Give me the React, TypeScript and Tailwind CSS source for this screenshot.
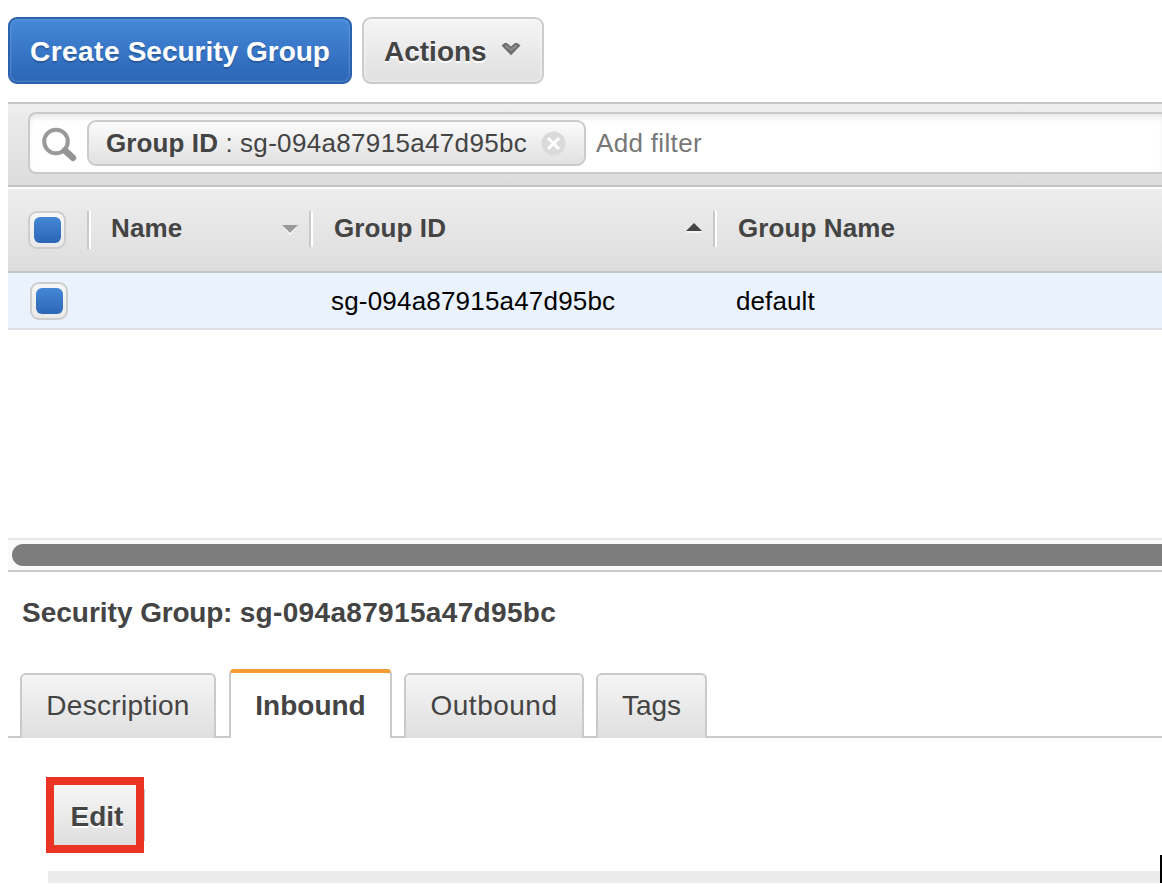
import type { ReactNode } from "react";

const GROUP_ID = "sg-094a87915a47d95bc";

function Checkbox() {
  return (
    <span className="flex h-[38px] w-[38px] shrink-0 items-center justify-center rounded-[9px] border-2 border-[#cdcdcd] bg-gradient-to-b from-[#f7f7f7] to-[#e9e9e9]">
      <span className="h-[26px] w-[27px] rounded-[6px] bg-gradient-to-b from-[#4587d6] to-[#2c66b6]" />
    </span>
  );
}

function Divider({ tall = false }: { tall?: boolean }) {
  return (
    <span
      className={
        tall
          ? "h-[38px] w-1 shrink-0 border-l-2 border-r-2 border-l-[#c9c9c9] border-r-white"
          : "mb-[2px] h-9 w-1 shrink-0 border-l-2 border-r-2 border-l-[#c9c9c9] border-r-white"
      }
    />
  );
}

function Tab({ width, children }: { width: string; children: ReactNode }) {
  return (
    <button
      className={`${width} h-[65px] shrink-0 rounded-t-[6px] border-2 border-b-0 border-[#cacaca] bg-gradient-to-b from-[#f5f5f5] to-[#dfdfdf] pb-[2px] text-[28px] leading-[60px] text-[#444]`}
    >
      {children}
    </button>
  );
}

function TabGap({ width }: { width: string }) {
  return <div className={`${width} h-[2px] bg-[#cacaca]`} />;
}

function Toolbar() {
  return (
    <div className="flex h-[102px] gap-[10px] pl-2 pt-[17px]">
      <button className="h-[67px] w-[344px] rounded-[9px] border-2 border-[#2a62b0] bg-gradient-to-b from-[#4688d8] to-[#2b65b6] pt-[3px] text-[28px] font-bold text-white shadow-[inset_0_0_2px_1px_rgba(130,170,210,0.45)] [text-shadow:0_2px_1px_rgba(0,0,0,0.2)]">
        <span className="tracking-[0.45px]">Create</span> Security Group
      </button>
      <button className="flex h-[67px] w-[182px] items-center rounded-[9px] border-2 border-[#cccccc] bg-gradient-to-b from-[#f5f5f5] to-[#dfdfdf] pl-[20px] pt-[3px] text-[28px] font-bold text-[#444] shadow-[inset_0_0_3px_1px_rgba(255,255,255,0.5)] [text-shadow:0_2px_0_#fff]">
        Actions
        <svg className="mb-[6px] ml-[14px]" width="20" height="14" viewBox="0 0 20 14">
          <path d="M.5 3.5 3.5 1h2.500L10 4.500 14 1h2.500l3 2.500L10 13.200z" fill="#707070" />
          <path d="m4.500 3.500 5.500 4.500 5.500-4.500" fill="none" stroke="#8e8e8e" strokeWidth="2" />
        </svg>
      </button>
    </div>
  );
}

function FilterBar() {
  return (
    <div className="mb-[2px] ml-2 h-[85px] border-b-2 border-t-2 border-b-[#c3c3c3] border-t-[#c6c6c6] bg-gradient-to-b from-[#eeeeee] to-[#dcdcdc] pl-5 pt-2">
      <div className="flex h-[62px] items-center rounded-l-[8px] border-2 border-r-0 border-[#cacaca] bg-white pl-[11px] shadow-[inset_0_5px_7px_-3px_rgba(0,0,0,0.13)]">
        <svg className="mt-1 shrink-0" width="36" height="36" viewBox="0 0 36 36">
          <circle cx="15" cy="14.500" r="11.800" fill="none" stroke="#999" strokeWidth="4" />
          <path d="M24 23.500 32 30.800" stroke="#949494" strokeWidth="6.500" strokeLinecap="round" />
        </svg>
        <div className="ml-[10px] flex h-[46px] w-[499px] shrink-0 items-center rounded-[9px] border-2 border-[#cbcbcb] bg-gradient-to-b from-[#fbfbfb] to-[#e1e1e1] pl-[17px] pt-px text-[26px] text-[#444]">
          <span className="font-bold tracking-[0.1px]">Group ID</span>
          <span className="w-[22px] text-center">:</span>
          <span className="tracking-[0.33px]">{GROUP_ID}</span>
          <svg className="ml-[14px]" width="25" height="25" viewBox="0 0 25 25">
            <circle cx="12.500" cy="12.500" r="12" fill="#dadada" />
            <path d="m7 7 11 11M18 7 7 18" stroke="#fff" strokeWidth="3" />
          </svg>
        </div>
        <span className="ml-[10px] pt-px text-[26px] tracking-[0.33px] text-[#777]">Add filter</span>
      </div>
    </div>
  );
}

function GroupTable() {
  return (
    <div className="ml-2 flex h-[383px] flex-col">
      <div className="flex h-[84px] shrink-0 items-center border-b-2 border-[#c6c6c6] bg-gradient-to-b from-[#eeeeee] to-[#dddddd] pl-5 text-[26px] font-bold text-[#444]">
        <Checkbox />
        <div className="ml-[21px] flex w-[222px] items-center">
          <Divider tall />
          <span className="mb-1 ml-5 flex-1 tracking-[0.15px]">Name</span>
          <svg className="mr-[11px]" width="16" height="10" viewBox="0 0 16 10">
            <path d="M0 0h16L8 10z" fill="#fff" />
            <path d="M0 0h16L8 8z" fill="#999" />
          </svg>
        </div>
        <div className="flex w-[404px] items-center">
          <Divider />
          <span className="mb-1 ml-[21px] flex-1 tracking-[0.1px]">Group ID</span>
          <svg className="mb-[5px] mr-[11px]" width="16" height="10" viewBox="0 0 16 10">
            <path d="M0 8h16v2H0z" fill="#f5f5f5" />
            <path d="M0 8 8 0l8 8z" fill="#444" />
          </svg>
        </div>
        <div className="flex items-center">
          <Divider />
          <span className="mb-1 ml-[21px] tracking-[0.1px]">Group Name</span>
        </div>
      </div>
      <div className="flex h-[57px] shrink-0 items-center border-b-2 border-[#dcdfe3] bg-[#eaf2fe] pl-[22px] text-[26px] text-black">
        <Checkbox />
        <span className="ml-[263px] w-[404px] pt-[2px] tracking-[0.19px]">{GROUP_ID}</span>
        <span className="ml-px pt-[2px] tracking-[0.1px]">default</span>
      </div>
      <div className="flex-1" />
      <div className="h-[34px] border-b-2 border-t-2 border-b-[#c9c9c9] border-t-[#e9e9e9] bg-[#fafafa] pl-1 pt-1">
        <div className="h-[22px] rounded-l-full bg-[#7d7d7d]" />
      </div>
    </div>
  );
}

function Details() {
  return (
    <div>
      <h2 className="h-[97px] pl-[22px] pt-[21px] text-[28px] font-bold leading-10 text-[#444]">
        Security <span className="tracking-[-0.25px]">Group: </span>
        <span className="tracking-[0.34px]">{GROUP_ID}</span>
      </h2>
      <div className="ml-2 flex h-[69px] items-end">
        <TabGap width="w-3" />
        <Tab width="w-[196px]"><span className="tracking-[0.3px]">Description</span></Tab>
        <div className="flex h-[69px] shrink-0 items-end">
          <TabGap width="w-[13px]" />
          <button className="flex h-[69px] w-[163px] shrink-0 flex-col rounded-t-[5px] border-l-2 border-r-2 border-t-4 border-l-[#cacaca] border-r-[#cacaca] border-t-[#f59b33] bg-white text-center text-[28px] font-bold leading-[66px] text-[#444]">
            <span className="w-full">Inbound</span>
          </button>
          <TabGap width="w-3" />
        </div>
        <Tab width="w-[180px]"><span className="tracking-[0.5px]">Outbound</span></Tab>
        <TabGap width="w-3" />
        <Tab width="w-[111px]">Tags</Tab>
        <TabGap width="flex-1" />
      </div>
      <div className="pl-[46px] pt-[39px]">
        <button className="relative h-[76px] w-[98px] border-[8px] border-[#ea3323] bg-gradient-to-b from-[#f7f7f7] to-[#dedede] pl-1 pt-[3px] text-[28px] font-bold text-[#444] [text-shadow:0_2px_0_#fff]">
          Edit
          <span className="absolute -right-[9px] top-1 h-[52px] w-px bg-[#cbcbcb]" />
        </button>
      </div>
      <div className="ml-12 mt-[18px] h-3 bg-[#ebebeb]" />
    </div>
  );
}

export default function App() {
  return (
    <main className="relative h-[888px] w-[1162px] overflow-hidden bg-white font-['Liberation_Sans',Arial,sans-serif]">
      <Toolbar />
      <FilterBar />
      <GroupTable />
      <Details />
      <div className="absolute right-0 top-[855px] h-7 w-[2px] bg-black" />
    </main>
  );
}
